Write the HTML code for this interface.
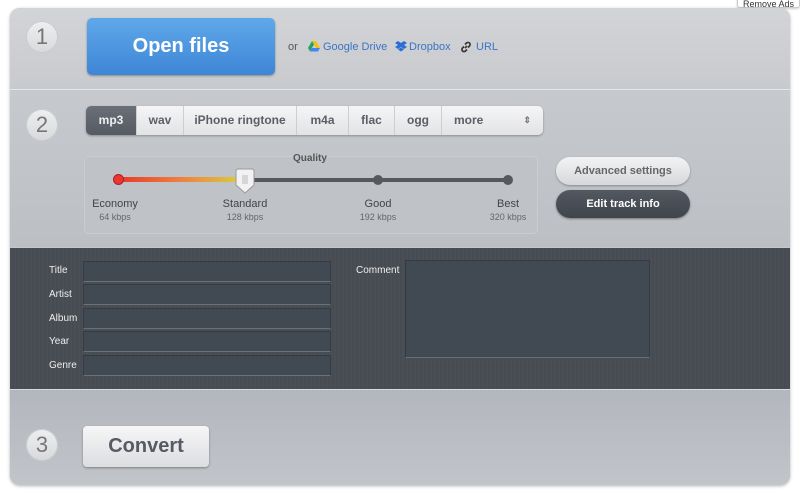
<!DOCTYPE html>
<html><head><meta charset="utf-8"><style>
*{box-sizing:border-box;margin:0;padding:0}
body{width:800px;height:493px;background:#fff;font-family:"Liberation Sans",sans-serif;position:relative;overflow:hidden}
.abs{position:absolute}
#ads{left:737px;top:-6px;width:63px;height:14px;border:1px solid #ccc;border-radius:3px;background:#fff;font-size:9px;color:#333;text-align:center;line-height:18px;box-shadow:0 1px 2px rgba(0,0,0,.2)}
#panel{left:10px;top:8px;width:780px;height:477px;border-radius:10px;overflow:hidden;background:#c4c7cc;box-shadow:0 1px 3px rgba(0,0,0,.3)}
#s1{left:0;top:0;width:780px;height:82px;background:linear-gradient(#d3d4d7,#c8cacd);border-bottom:1px solid #e6e7e9}
#s2{left:0;top:83px;width:780px;height:156px;background:linear-gradient(#c6c9cd,#bcbfc4)}
#s3{left:0;top:240px;width:780px;height:142px;background:repeating-linear-gradient(90deg,#4a4e55 0 2px,#474b52 2px 4px);border-bottom:1px solid #d8dadd}
#s4{left:0;top:382px;width:780px;height:95px;background:linear-gradient(#b3b7bd,#c1c4c9)}
.num{width:32px;height:32px;border-radius:50%;background:linear-gradient(#eeeff0,#d8d9db);box-shadow:0 0 0 1px #c7c9cc inset;color:#777;font-size:22px;text-align:center;line-height:32px;font-weight:300}
#open{left:77px;top:10px;width:188px;height:57px;border-radius:5px;background:linear-gradient(#5fa8ea,#3e86d6);color:#fff;font-weight:bold;font-size:20px;text-align:center;line-height:57px;box-shadow:0 1px 2px rgba(0,0,0,.35)}
.lnk{font-size:11px;color:#3a74c6;top:33px}
#tabs{left:76px;top:98px;height:29px;border-radius:5px;display:flex;background:linear-gradient(#f5f5f6,#e2e3e5);box-shadow:0 1px 2px rgba(0,0,0,.3);overflow:hidden}
#tabs div{height:29px;line-height:29px;font-size:12px;font-weight:bold;color:#5a5e66;text-align:center;border-right:1px solid #ccced1}
#tabs div.on{background:linear-gradient(#6a6f78,#555a63);color:#f0f0f0}
#q{left:74px;top:148px;width:454px;height:78px;border:1px solid #c9ccd0;border-radius:5px;background:#bfc2c7}
.lbl{font-size:11px;color:#444;text-align:center;width:80px}
.kb{font-size:9px;color:#666;text-align:center;width:80px}
.btn{width:134px;height:28px;border-radius:14px;text-align:center;line-height:28px;font-size:11px;font-weight:bold}
.fl{font-size:10px;color:#eee;left:39px}
.inp{left:73px;width:248px;height:21px;background:#414953;border:1px solid #353b42;border-bottom-color:#6a7078}
</style></head><body>
<div id="ads" class="abs">Remove Ads</div>
<div id="panel" class="abs">
 <div id="s1" class="abs"></div>
 <div id="s2" class="abs"></div>
 <div id="s3" class="abs"></div>
 <div id="s4" class="abs"></div>
 <div class="abs num" style="left:16px;top:13px">1</div>
 <div id="open" class="abs">Open files</div>
 <div class="abs" style="left:278px;top:33px;font-size:11px;color:#555">or</div>
 <svg class="abs" style="left:298px;top:33px" width="12" height="11" viewBox="0 0 12 11"><path d="M4 0h4l4 7H8z" fill="#f4c20d"/><path d="M4 0L0 7l2 3.5L6 3.5z" fill="#1fa463"/><path d="M2 10.5h8l2-3.5H4z" fill="#4285f4"/></svg>
 <div class="abs lnk" style="left:313px">Google Drive</div>
 <svg class="abs" style="left:385px;top:33px" width="12" height="11" viewBox="0 0 12 11"><path d="M3 0L0 2l3 2-3 2 3 2 3-2 3 2 3-2-3-2 3-2-3-2-3 2zM3 8.5l3 2 3-2-3-2z" fill="#2b6fd4"/></svg>
 <div class="abs lnk" style="left:399px">Dropbox</div>
 <svg class="abs" style="left:450px;top:33px" width="12" height="12" viewBox="0 0 12 12"><path d="M5 7l2-2M4 5.5L2.5 7a2 2 0 003 3L7 8.5M8 6.5L9.5 5a2 2 0 00-3-3L5 3.5" stroke="#333" stroke-width="1.6" fill="none"/></svg>
 <div class="abs lnk" style="left:466px">URL</div>

 <div class="abs num" style="left:16px;top:101px">2</div>
 <div id="tabs" class="abs"><div class="on" style="width:51px">mp3</div><div style="width:47px">wav</div><div style="width:113px">iPhone ringtone</div><div style="width:52px">m4a</div><div style="width:46px">flac</div><div style="width:47px">ogg</div><div style="width:101px;border:none;position:relative;text-align:left;padding-left:12px">more<span style="position:absolute;right:12px;top:0;font-size:9px;color:#777;line-height:29px">&#8661;</span></div></div>
 <div id="q" class="abs"></div>
 <div class="abs" style="left:283px;top:145px;font-size:10px;font-weight:bold;color:#555">Quality</div>
 <div class="abs" style="left:108px;top:169px;width:126px;height:5px;border-radius:3px;background:linear-gradient(90deg,#e53a2a,#f08040 50%,#d8d040)"></div>
 <div class="abs" style="left:234px;top:170px;width:264px;height:4px;background:#55585d"></div>
 <div class="abs" style="left:103px;top:166px;width:11px;height:11px;border-radius:50%;background:#e33;border:1px solid #a22"></div>
 <div class="abs" style="left:363px;top:167px;width:10px;height:10px;border-radius:50%;background:#55585d"></div>
 <div class="abs" style="left:493px;top:167px;width:10px;height:10px;border-radius:50%;background:#55585d"></div>
 <svg class="abs" style="left:225px;top:160px" width="20" height="27" viewBox="0 0 20 27"><path d="M3 1h14a2 2 0 012 2v14l-9 8-9-8V3a2 2 0 012-2z" fill="#f2f2f2" stroke="#999"/><path d="M8 7v9M10 7v9M12 7v9" stroke="#bbb"/></svg>
 <div class="abs lbl" style="left:65px;top:190px">Economy</div><div class="abs kb" style="left:65px;top:204px">64 kbps</div>
 <div class="abs lbl" style="left:195px;top:190px">Standard</div><div class="abs kb" style="left:195px;top:204px">128 kbps</div>
 <div class="abs lbl" style="left:328px;top:190px">Good</div><div class="abs kb" style="left:328px;top:204px">192 kbps</div>
 <div class="abs lbl" style="left:458px;top:190px">Best</div><div class="abs kb" style="left:458px;top:204px">320 kbps</div>
 <div class="abs btn" style="left:546px;top:149px;background:linear-gradient(#f3f3f4,#d6d8db);color:#666;box-shadow:0 1px 2px rgba(0,0,0,.3)">Advanced settings</div>
 <div class="abs btn" style="left:546px;top:182px;background:linear-gradient(#535861,#40444b);color:#fff;box-shadow:0 1px 2px rgba(0,0,0,.4)">Edit track info</div>

 <div class="abs fl" style="top:257px">Title</div><div class="abs inp" style="top:253px"></div>
 <div class="abs fl" style="top:281px">Artist</div><div class="abs inp" style="top:276px"></div>
 <div class="abs fl" style="top:305px">Album</div><div class="abs inp" style="top:300px"></div>
 <div class="abs fl" style="top:328px">Year</div><div class="abs inp" style="top:323px"></div>
 <div class="abs fl" style="top:352px">Genre</div><div class="abs inp" style="top:347px"></div>
 <div class="abs fl" style="left:346px;top:257px">Comment</div>
 <div class="abs" style="left:395px;top:252px;width:245px;height:98px;background:#414953;border:1px solid #353b42;border-bottom-color:#6a7078"></div>

 <div class="abs num" style="left:16px;top:421px">3</div>
 <div class="abs" style="left:73px;top:418px;width:126px;height:41px;border-radius:4px;background:linear-gradient(#f6f6f7,#dcdde0);box-shadow:0 1px 2px rgba(0,0,0,.35);color:#555a63;font-weight:bold;font-size:20px;text-align:center;line-height:41px">Convert</div>
</div>
</body></html>
